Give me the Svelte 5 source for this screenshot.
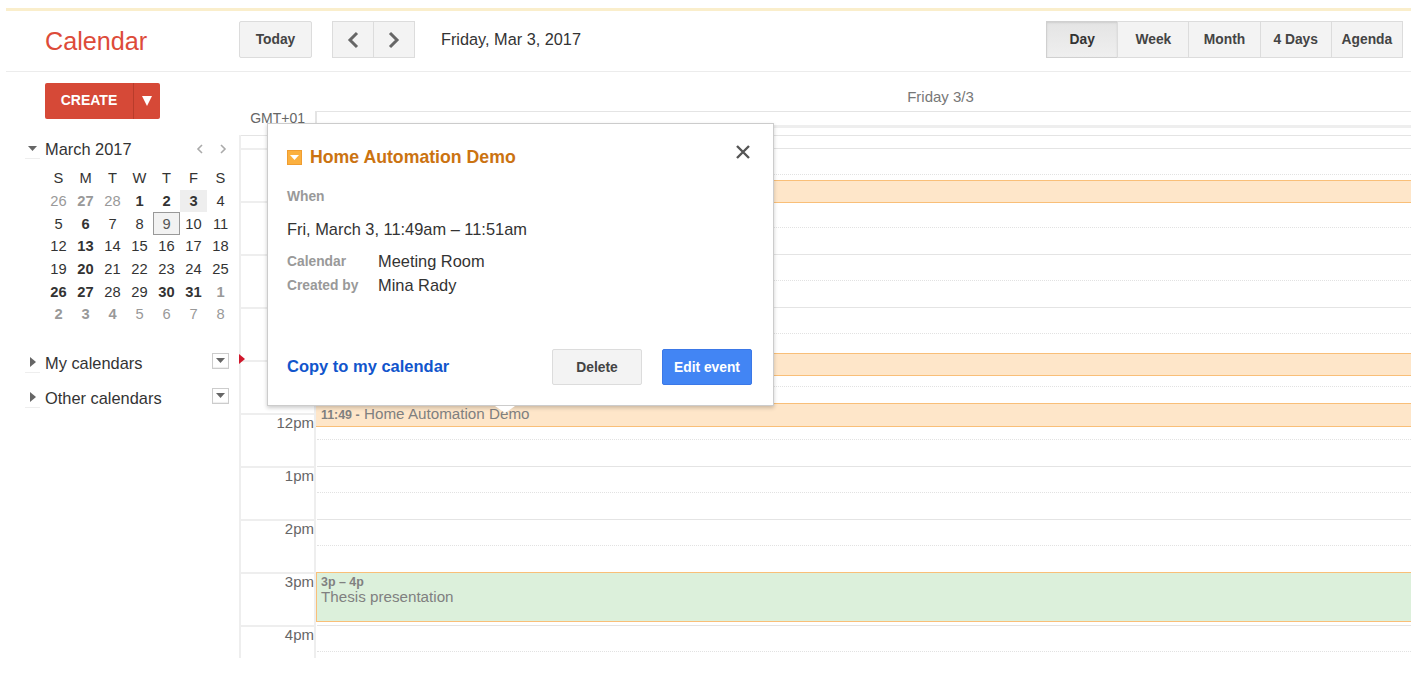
<script>
  const views = ["Day", "Week", "Month", "4 Days", "Agenda"];
  const weekdays = ["S", "M", "T", "W", "T", "F", "S"];

  // d = other month, b = has events, t = today, s = selected
  const days = [
    "26d", "27db", "28d", "1b", "2b", "3bt", "4",
    "5", "6b", "7", "8", "9s", "10", "11",
    "12", "13b", "14", "15", "16", "17", "18",
    "19", "20b", "21", "22", "23", "24", "25",
    "26b", "27b", "28", "29", "30b", "31b", "1db",
    "2db", "3db", "4db", "5d", "6d", "7d", "8d",
  ].map((d) => ({
    n: parseInt(d),
    dim: d.includes("d"),
    bold: d.includes("b"),
    now: d.includes("t"),
    sel: d.includes("s"),
  }));

  // the morning labels sit behind the event popup
  const hours = ["", "", "", "", "", "12pm", "1pm", "2pm", "3pm", "4pm"];
  const hourHeight = 53;
  const startHour = 7;

  const events = [
    { start: 7 * 60 + 36, height: 23, kind: "orange", time: "", title: "" },
    { start: 10 * 60 + 52, height: 23, kind: "orange", time: "", title: "" },
    { start: 11 * 60 + 49, height: 24, kind: "orange", time: "11:49 -", title: "Home Automation Demo" },
    { start: 15 * 60, height: 50, kind: "green", time: "3p – 4p", title: "Thesis presentation" },
  ];

  const topOf = (min) => ((min - startHour * 60) * hourHeight) / 60;
</script>

<div class="page">
  <div class="stripe"></div>

  <header class="topbar">
    <div class="brand">Calendar</div>
    <button class="btn today">Today</button>
    <div class="group nav">
      <button class="btn" aria-label="Previous">
        <svg width="14" height="18" viewBox="0 0 14 18"><path d="M11 2 4 9l7 7" fill="none" stroke="#666" stroke-width="3" /></svg>
      </button>
      <button class="btn" aria-label="Next">
        <svg width="14" height="18" viewBox="0 0 14 18"><path d="M3 2l7 7-7 7" fill="none" stroke="#666" stroke-width="3" /></svg>
      </button>
    </div>
    <div class="current-date">Friday, Mar 3, 2017</div>
    <div class="group views">
      {#each views as view, i}
        <button class="btn" class:active={i === 0}>{view}</button>
      {/each}
    </div>
  </header>

  <div class="body">
    <aside class="sidebar">
      <div class="create">
        <span class="create-label">CREATE</span>
        <span class="create-arrow">
          <svg width="10" height="10" viewBox="0 0 10 10"><path d="M0 0h10L5 10z" fill="#fff" /></svg>
        </span>
      </div>

      <div class="mini-head">
        <span class="toggle">
          <svg width="9" height="6" viewBox="0 0 9 6"><path d="M0 0h9L4.5 5z" fill="#666" /></svg>
        </span>
        <span>March 2017</span>
        <span class="mini-nav">
          <svg width="8" height="10" viewBox="0 0 8 10"><path d="M6 1 2 5l4 4" fill="none" stroke="#aaa" stroke-width="1.6" /></svg>
          <svg width="8" height="10" viewBox="0 0 8 10"><path d="M2 1l4 4-4 4" fill="none" stroke="#aaa" stroke-width="1.6" /></svg>
        </span>
      </div>

      <div class="mini-grid">
        {#each weekdays as w}
          <div class="cell">{w}</div>
        {/each}
        {#each days as d}
          <div class="cell" class:dim={d.dim} class:bold={d.bold} class:now={d.now} class:sel={d.sel}>{d.n}</div>
        {/each}
      </div>

      <div class="section first">
        <span class="toggle">
          <svg width="6" height="10" viewBox="0 0 6 10"><path d="M0 0v10l6-5z" fill="#666" /></svg>
        </span>
        <span>My calendars</span>
        <span class="drop"><svg width="9" height="5" viewBox="0 0 9 5"><path d="M0 0h9L4.500 5z" fill="#666" /></svg></span>
      </div>
      <div class="section">
        <span class="toggle">
          <svg width="6" height="10" viewBox="0 0 6 10"><path d="M0 0v10l6-5z" fill="#666" /></svg>
        </span>
        <span>Other calendars</span>
        <span class="drop"><svg width="9" height="5" viewBox="0 0 9 5"><path d="M0 0h9L4.500 5z" fill="#666" /></svg></span>
      </div>
    </aside>

    <main class="main">
      <div class="day-head">Friday 3/3</div>

      <div class="allday">
        <div class="gmt">GMT+01</div>
        <div class="allday-box"></div>
      </div>

      <div class="grid">
        <div class="gutter">
          <div class="stub"></div>
          {#each hours as h}
            <div class="gutter-hour">{h}</div>
          {/each}
        </div>
        <div class="day">
          <div class="stub"></div>
          <div class="hours">
            {#each hours as h}
              <div class="hour"><div class="half"></div></div>
            {/each}
            {#each events as e}
              <div class="event {e.kind}" style="top: {topOf(e.start)}px; height: {e.height}px">
                {#if e.kind === "green"}
                  <div class="ev-time">{e.time}</div>
                  <div class="ev-title">{e.title}</div>
                {:else if e.title}
                  <div class="ev-line"><span class="ev-time">{e.time}</span> <span class="ev-title">{e.title}</span></div>
                {/if}
              </div>
            {/each}
          </div>
        </div>
        <span class="now-mark"></span>
      </div>
    </main>
  </div>

  <div class="popup">
    <svg class="close" width="16" height="16" viewBox="0 0 16 16"><path d="M2 2l12 12M14 2 2 14" stroke="#555" stroke-width="2.4" fill="none" /></svg>
    <div class="pop-title">
      <span class="pop-icon"><svg width="9" height="5" viewBox="0 0 9 5"><path d="M0 0h9L4.500 5z" fill="#fff" /></svg></span>
      <span>Home Automation Demo</span>
    </div>
    <div class="label when">When</div>
    <div class="pop-date">Fri, March 3, 11:49am – 11:51am</div>
    <div class="pop-rows">
      <div class="pop-row"><span class="label">Calendar</span><span>Meeting Room</span></div>
      <div class="pop-row"><span class="label">Created by</span><span>Mina Rady</span></div>
    </div>
    <div class="pop-foot">
      <span class="copy">Copy to my calendar</span>
      <button class="btn delete">Delete</button>
      <button class="btn edit">Edit event</button>
    </div>
    <span class="caret"></span>
  </div>
</div>

<style>
  :global(body) {
    margin: 0;
    background: #fff;
    font-family: "Liberation Sans", Arial, sans-serif;
    color: #222;
  }

  .page {
    position: relative;
    box-sizing: border-box;
    width: 1422px;
    height: 673px;
    padding: 8px 11px 0 6px;
    overflow: hidden;
  }

  .stripe {
    height: 3px;
    background: #faeecb;
  }

  .topbar {
    display: flex;
    align-items: flex-start;
    box-sizing: border-box;
    height: 61px;
    padding-top: 10px;
    border-bottom: 1px solid #ececec;
  }

  .brand {
    width: 194px;
    margin-left: 39px;
    font-size: 25.2px;
    line-height: 40px;
    color: #dd4b39;
  }

  .btn {
    display: flex;
    align-items: center;
    justify-content: center;
    box-sizing: border-box;
    height: 37px;
    padding: 0;
    border: 1px solid #dcdcdc;
    border-radius: 2px;
    background: #f3f3f3;
    font-family: inherit;
    font-size: 13.8px;
    font-weight: bold;
    color: #444;
  }

  .today {
    width: 73px;
  }

  .group {
    display: flex;
  }

  .group .btn {
    border-radius: 0;
  }

  .group .btn + .btn {
    margin-left: -1px;
  }

  .nav {
    margin-left: 20px;
  }

  .nav .btn {
    width: 42px;
  }

  .current-date {
    margin-left: 26px;
    font-size: 16.3px;
    line-height: 37px;
    color: #333;
  }

  .views {
    margin-left: auto;
    margin-right: 8px;
  }

  .views .btn {
    width: 72.2px;
  }

  .views .active {
    background: linear-gradient(#e4e4e4, #efefef);
    border-color: #d0d0d0;
    box-shadow: inset 0 1px 2px rgba(0, 0, 0, 0.1);
    color: #333;
  }

  .body {
    display: flex;
  }

  .sidebar {
    box-sizing: border-box;
    flex: none;
    width: 233px;
    padding: 11px 5px 0 39px;
    font-size: 16.4px;
    color: #333;
  }

  .create {
    display: flex;
    width: 115px;
    height: 36px;
    border-radius: 2px;
    background: #d64937;
    color: #fff;
    font-size: 14px;
    font-weight: bold;
    line-height: 34px;
  }

  .create-label {
    width: 88px;
    border-right: 1px solid #b93c2b;
    text-align: center;
  }

  .create-arrow {
    display: flex;
    align-items: center;
    justify-content: center;
    flex: 1;
  }

  .mini-head {
    display: flex;
    align-items: center;
    height: 20px;
    margin: 20px 0 8px -20px;
  }

  .toggle {
    display: flex;
    align-items: center;
    justify-content: center;
    box-sizing: border-box;
    flex: none;
    width: 15px;
    height: 20px;
    margin-right: 5px;
    border-bottom: 1px solid #eee;
  }

  .mini-nav {
    display: flex;
    gap: 15px;
    margin-left: auto;
    margin-right: 7px;
  }

  .mini-grid {
    display: grid;
    grid-template-columns: repeat(7, 27px);
    grid-auto-rows: 22.7px;
    font-size: 14.7px;
  }

  .cell {
    display: flex;
    align-items: center;
    justify-content: center;
    box-sizing: border-box;
  }

  .dim {
    color: #999;
  }

  .bold {
    font-weight: bold;
  }

  .now {
    background: #eee;
  }

  .sel {
    border: 1px solid #999;
    background: #f2f2f2;
    color: #555;
  }

  .section {
    display: flex;
    align-items: flex-start;
    height: 20px;
    margin: 15px 0 0 -20px;
    padding-right: 5px;
    line-height: 20px;
  }

  .section.first {
    margin-top: 27px;
  }

  .drop {
    display: flex;
    align-items: center;
    justify-content: center;
    box-sizing: border-box;
    width: 17px;
    height: 16px;
    margin-left: auto;
    border: 1px solid #ccc;
    box-shadow: inset 0 -1px 1px #eee;
  }

  .main {
    flex: 1;
    min-width: 0;
  }

  .day-head {
    box-sizing: border-box;
    height: 39px;
    padding-left: 231px;
    font-size: 15px;
    line-height: 50px;
    color: #777;
    text-align: center;
  }

  .allday {
    display: flex;
    height: 24px;
  }

  .gmt {
    box-sizing: border-box;
    width: 76px;
    padding-right: 10px;
    font-size: 14px;
    line-height: 14px;
    color: #666;
    text-align: right;
    white-space: nowrap;
  }

  .allday-box {
    flex: 1;
    box-sizing: border-box;
    height: 17px;
    border: 1px solid #e4e4e4;
    border-width: 1px 0 3px 2px;
    border-bottom-color: #eee;
  }

  .grid {
    position: relative;
    display: flex;
    height: 523px;
    overflow: hidden;
  }

  .gutter {
    flex: none;
    box-sizing: border-box;
    width: 77px;
    border-left: 2px solid #eee;
    border-right: 2px solid #eee;
  }

  .stub {
    box-sizing: border-box;
    height: 13px;
    border-top: 1px solid #e4e4e4;
  }

  .gutter-hour {
    box-sizing: border-box;
    height: 53px;
    border-top: 2px solid #eee;
    font-size: 15px;
    line-height: 16px;
    color: #666;
    text-align: right;
  }

  .day {
    flex: 1;
    min-width: 0;
  }

  .hours {
    position: relative;
  }

  .hour {
    box-sizing: border-box;
    height: 53px;
    margin-left: 1px;
    border-top: 1px solid #e4e4e4;
  }

  .half {
    height: 25px;
    border-bottom: 1px dotted #e2e2e2;
  }

  .event {
    position: absolute;
    left: 0;
    right: 0;
    box-sizing: border-box;
    padding-left: 5px;
    border-top: 1px solid #f9bf78;
    border-bottom: 1px solid #f9bf78;
    color: #808080;
    overflow: hidden;
  }

  .orange {
    background: #fee6c9;
  }

  .green {
    background: #dcf0db;
    border-left: 1px solid #f9bf78;
    padding-left: 4px;
  }

  .ev-time {
    font-size: 12.4px;
    font-weight: bold;
    line-height: 13px;
  }

  .ev-title {
    font-size: 15.2px;
    line-height: 17px;
  }

  .ev-line {
    line-height: 20px;
  }

  .green .ev-time {
    margin-top: 3px;
  }

  .green .ev-title {
    margin-top: -1px;
  }

  .now-mark {
    position: absolute;
    left: 0;
    top: 219px;
    border-left: 6px solid #d0182c;
    border-top: 5px solid transparent;
    border-bottom: 5px solid transparent;
  }

  .popup {
    position: absolute;
    left: 267px;
    top: 123px;
    display: flex;
    flex-direction: column;
    box-sizing: border-box;
    width: 507px;
    height: 283px;
    padding: 23px 21px 20px 19px;
    border: 1px solid #ccc;
    background: #fff;
    box-shadow: 0 2px 4px rgba(0, 0, 0, 0.2);
    font-size: 16.4px;
    color: #333;
  }

  .close {
    position: absolute;
    top: 20px;
    right: 22px;
  }

  .pop-title {
    display: flex;
    align-items: center;
    gap: 8px;
    height: 21px;
    font-size: 17.7px;
    font-weight: bold;
    color: #cb7311;
  }

  .pop-icon {
    display: flex;
    align-items: center;
    justify-content: center;
    box-sizing: border-box;
    width: 15px;
    height: 15px;
    background: #fbb03f;
    border: 1px solid #f09d30;
  }

  .label {
    font-size: 13.8px;
    font-weight: bold;
    color: #999;
  }

  .when {
    margin-top: 21px;
    line-height: 16px;
  }

  .pop-date {
    margin-top: 14px;
    line-height: 20px;
  }

  .pop-rows {
    margin-top: 10px;
  }

  .pop-row {
    display: grid;
    grid-template-columns: 91px 1fr;
    align-items: center;
    height: 24.5px;
  }

  .pop-foot {
    display: flex;
    align-items: center;
    margin-top: auto;
  }

  .copy {
    margin-right: auto;
    margin-top: -2px;
    font-size: 16.5px;
    font-weight: bold;
    color: #1155cc;
  }

  .delete {
    width: 90px;
    height: 36px;
    margin-right: 20px;
  }

  .edit {
    width: 90px;
    height: 36px;
    border-color: #3b78e7;
    background: #4285f4;
    color: #fff;
  }

  .caret {
    position: absolute;
    left: 227px;
    bottom: -8px;
    border-top: 7px solid #fff;
    border-left: 10px solid transparent;
    border-right: 10px solid transparent;
  }
</style>
